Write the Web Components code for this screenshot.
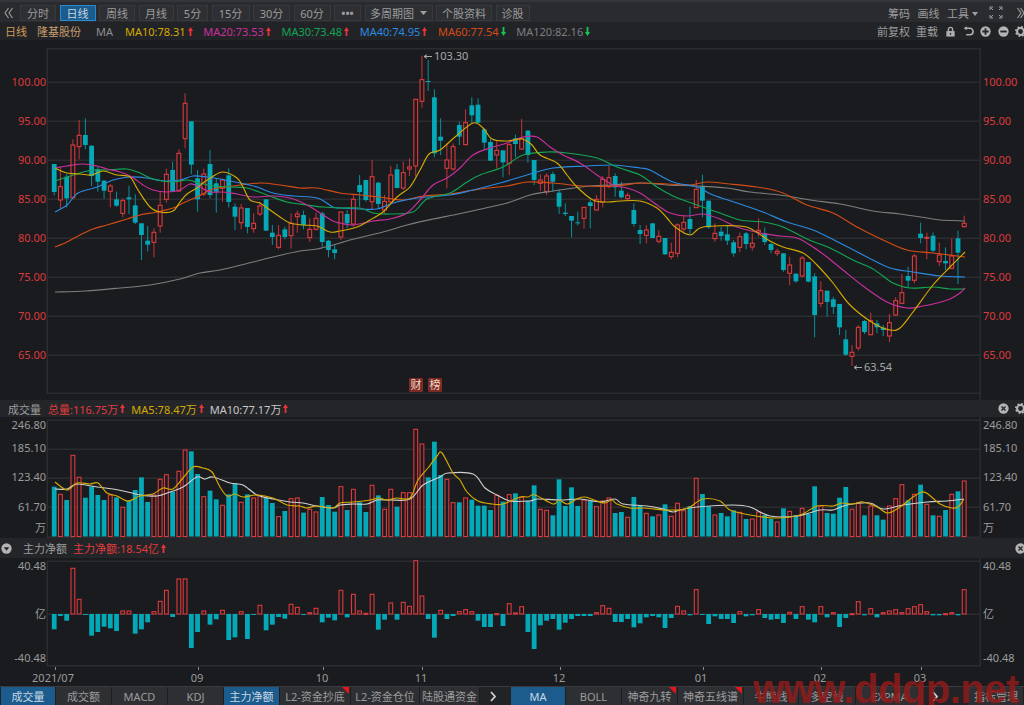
<!DOCTYPE html>
<html lang="zh">
<head>
<meta charset="utf-8">
<title>隆基股份 日线</title>
<style>
  html, body { margin: 0; height: 100%; overflow: hidden; background: #1a1b1f; }
  body { font-family: "Noto Sans", "Noto Sans CJK SC", sans-serif; font-size: 11px; color: #9c9c9c; }
</style>
</head>
<body>
<quote-app>
  <tool-bar slot="toolbar">
    <svg slot="left" class="back" width="9" height="12" viewBox="0 0 9 12" fill="none" stroke="#a0a0a0" stroke-width="1.1"><path d="M4.5 1L1 6l3.5 5M8.5 1L5 6l3.5 5"/></svg>
    <tool-btn slot="left" w="36">分时</tool-btn>
    <tool-btn slot="left" w="36" active>日线</tool-btn>
    <tool-btn slot="left" w="36">周线</tool-btn>
    <tool-btn slot="left" w="35">月线</tool-btn>
    <tool-btn slot="left" w="31">5分</tool-btn>
    <tool-btn slot="left" w="38">15分</tool-btn>
    <tool-btn slot="left" w="37">30分</tool-btn>
    <tool-btn slot="left" w="37">60分</tool-btn>
    <tool-btn slot="left" w="27"><b>•••</b></tool-btn>
    <tool-btn slot="left" w="68" caret>多周期图</tool-btn>
    <tool-btn slot="left" w="56">个股资料</tool-btn>
    <tool-btn slot="left" w="34">诊股</tool-btn>
    <span slot="right">筹码</span>
    <span slot="right">画线</span>
    <span slot="right">工具<svg width="6" height="4" viewBox="0 0 6 4" style="margin-left:3px;vertical-align:2px"><path d="M0 0h6L3 4z" fill="#a0a0a0"/></svg></span>
    <svg slot="right" width="14" height="13" viewBox="0 0 14 13" style="margin:0 6.5px 0 3.5px" fill="none" stroke="#a0a0a0" stroke-width="1"><path d="M1 4V1h3M13 4V1h-3M1 9v3h3M13 9v3h-3M2 2l2 2M12 2l-2 2M2 11l2-2M12 11l-2-2"/></svg>
    <svg slot="right" width="7" height="12" viewBox="0 0 7 12" fill="none" stroke="#a0a0a0" stroke-width="1.1"><path d="M.5 1L4 6 .5 11M3.5 1L7 6l-3.5 5"/></svg>
  </tool-bar>

  <legend-row slot="legend">
    <span slot="left" style="color:#cf9a56;width:32px">日线</span>
    <span slot="left" style="color:#c49c6c;width:59px">隆基股份</span>
    <span slot="left" style="color:#8e8e8e;width:29px">MA</span>
    <ma-item slot="left" color="#d4aa00" dir="up">MA10:78.31</ma-item>
    <ma-item slot="left" color="#c8309c" dir="up">MA20:73.53</ma-item>
    <ma-item slot="left" color="#12a552" dir="up">MA30:73.48</ma-item>
    <ma-item slot="left" color="#2a8ae0" dir="up">MA40:74.95</ma-item>
    <ma-item slot="left" color="#d44c14" dir="down">MA60:77.54</ma-item>
    <ma-item slot="left" color="#7e7e7e" dir="down">MA120:82.16</ma-item>
    <span slot="right" style="margin-right:6px">前复权</span>
    <span slot="right" style="margin-right:7px">重载</span>
    <icon-glyph slot="right" name="lock"></icon-glyph>
    <icon-glyph slot="right" name="undo"></icon-glyph>
    <icon-glyph slot="right" name="plus"></icon-glyph>
    <icon-glyph slot="right" name="minus"></icon-glyph>
    <icon-glyph slot="right" name="gear"></icon-glyph>
  </legend-row>

  <kline-pane slot="kline"></kline-pane>

  <pane-title slot="voltitle">
    <span slot="left" style="margin:0 7px 0 8px">成交量</span>
    <ma-item slot="left" color="#e03c3c" dir="up">总量:116.75万</ma-item>
    <ma-item slot="left" color="#d4aa00" dir="up">MA5:78.47万</ma-item>
    <ma-item slot="left" color="#c8c8c8" dir="up">MA10:77.17万</ma-item>
    <icon-glyph slot="right" name="close"></icon-glyph>
    <icon-glyph slot="right" name="gear"></icon-glyph>
  </pane-title>
  <volume-pane slot="volume"></volume-pane>

  <pane-title slot="flowtitle">
    <icon-glyph slot="left" name="drop" style="margin:0 11px 0 1px"></icon-glyph>
    <span slot="left" style="margin-right:6px">主力净额</span>
    <ma-item slot="left" color="#e03c3c" dir="up">主力净额:18.54亿</ma-item>
    <icon-glyph slot="right" name="close"></icon-glyph>
  </pane-title>
  <flow-pane slot="flow"></flow-pane>

  <date-axis slot="dates"></date-axis>

  <tab-bar slot="tabs">
    <tab-btn slot="left" w="55" active>成交量</tab-btn>
    <tab-btn slot="left" w="56">成交额</tab-btn>
    <tab-btn slot="left" w="56">MACD</tab-btn>
    <tab-btn slot="left" w="56">KDJ</tab-btn>
    <tab-btn slot="left" w="56" active>主力净额</tab-btn>
    <tab-btn slot="left" w="71" flag>L2-资金抄底</tab-btn>
    <tab-btn slot="left" w="69">L2-资金仓位</tab-btn>
    <tab-btn slot="left" w="60">陆股通资金</tab-btn>
    <tab-btn slot="left" w="26" plain><svg width="7" height="11" viewBox="0 0 7 11" fill="none" stroke="#d0d0d0" stroke-width="1.8"><path d="M1 1l4 4.5L1 10"/></svg></tab-btn>
    <tab-btn slot="mid" w="55" active>MA</tab-btn>
    <tab-btn slot="mid" w="56">BOLL</tab-btn>
    <tab-btn slot="mid" w="56" flag>神奇九转</tab-btn>
    <tab-btn slot="mid" w="66" flag>神奇五线谱</tab-btn>
    <tab-btn slot="mid" w="55">牛熊线</tab-btn>
    <tab-btn slot="mid" w="57">多空线</tab-btn>
    <tab-btn slot="mid" w="68">EXPMA</tab-btn>
    <tab-btn slot="mid" w="22" plain><svg width="7" height="11" viewBox="0 0 7 11" fill="none" stroke="#d0d0d0" stroke-width="1.8"><path d="M1 1l4 4.5L1 10"/></svg></tab-btn>
    <tab-btn slot="right" w="55">指标管理</tab-btn>
  </tab-bar>

  <water-mark slot="mark">www.ddgp.net</water-mark>
</quote-app>

<script>
const FONT = `"Noto Sans", "Noto Sans CJK SC", sans-serif`;
const RED = "#dd3a3c", CYAN = "#04a8b6", RED_WICK = "#c4343a", CYAN_WICK = "#0a8f9a";
const GRID = "#2b2c30", AXIS = "#9c9c9c", BG = "#1a1b1f";
const barX = (i) => 54.2 + 6.233 * i;

// [up, bodyTop, bodyBottom, wickTop, wickBottom] read off the crops, 3x scale
const candlesA = [[0,222,306,222,316],[1,290,330,232,355],[0,260,325,252,352],[1,165,323,148,325],[1,136,170,90,208],[0,135,165,85,178],[0,167,258,167,288],[0,238,275,230,305],[0,272,302,270,326],[1,288,304,282,352],[0,328,347,305,350],[1,332,370,325,382],[0,322,328,287,372],[0,346,398,313,402],[0,400,435,400,510],[0,452,464,408,484],[1,427,457,415,502],[1,346,408,305,428],[1,253,328,236,338],[0,240,304,215,304],[1,190,303,178,306],[1,40,146,10,175],[0,94,224,94,252],[0,265,328,240,365],[1,252,312,236,318],[0,222,315,180,325],[0,280,305,265,368],[1,270,295,265,335],[0,256,336,235,352],[0,350,380,340,420],[1,354,398,342,418],[0,354,411,354,430],[1,400,416,370,428],[1,348,372,335,378],[0,328,422,328,422],[0,428,441,405,465],[1,436,472,405,478],[0,418,441,410,448],[1,400,437,370,476],[1,372,380,362,428],[0,375,405,362,418],[1,418,443,385,456],[1,385,418,368,422],[0,370,456,365,470],[0,452,480,450,502],[0,478,489,462,508]];
const candlesB = [[1,516,591,516,600],[0,522,550,510,565],[1,478,552,462,560],[0,435,456,405,500],[0,420,480,420,485],[1,410,485,360,510],[0,428,492,425,505],[1,484,510,465,520],[1,405,486,378,490],[0,388,444,372,445],[1,398,444,365,450],[1,381,387,355,408],[1,178,378,178,410],[1,119,184,47,203],[0,123,126,60,153],[0,172,340,148,352],[0,290,302,235,345],[1,360,385,310,445],[1,320,387,310,392],[0,255,290,245,315],[1,248,314,208,316],[0,196,226,172,250],[0,194,248,175,250],[0,268,308,265,330],[0,306,362,296,362],[1,331,345,300,385],[0,331,367,331,412],[1,314,370,310,405],[0,295,312,284,352],[1,295,327,237,330],[0,272,345,270,368],[0,360,420,360,435],[1,420,430,403,452],[1,408,455,400,465],[0,402,425,395,455],[0,458,500,448,522],[0,518,522,490,528],[0,528,542,528,592],[0,547,549,515,556],[1,502,535,502,566],[0,487,498,480,565],[1,478,510,465,512],[1,418,486,408,502],[1,413,440,378,445],[0,408,442,400,470],[0,452,472,425,475],[1,466,476,458,482],[0,510,552,490,560]];
const candlesC = [[0,180,192,165,222],[1,180,196,165,220],[0,160,204,160,204],[1,199,214,180,220],[0,204,253,204,255],[1,247,260,218,268],[1,165,250,160,262],[1,157,177,135,185],[0,147,177,110,195],[1,58,113,30,113],[0,50,92,14,142],[0,92,172,92,176],[1,190,206,160,216],[0,185,198,170,212],[0,193,212,165,225],[0,217,250,210,260],[1,200,232,188,246],[0,190,222,186,238],[1,220,231,190,242],[1,181,186,145,200],[0,190,216,172,225],[0,222,240,218,250],[1,244,250,236,258],[0,250,300,250,305],[1,285,310,260,346],[0,311,334,311,338],[1,264,318,258,322],[0,276,335,276,337],[0,319,435,310,502],[1,362,400,334,412],[0,362,396,362,440],[0,388,411,380,432],[0,402,472,402,495],[0,508,554,480,558],[1,547,559,525,588],[1,472,534,466,542],[0,453,486,450,492],[1,452,494,428,496],[0,460,472,450,490],[0,473,480,465,498],[1,458,498,432,516],[1,392,435,382,437],[1,368,400,312,402],[0,318,332,290,354],[1,258,331,252,340],[0,191,204,158,220],[1,202,204,188,268],[0,197,242,187,248],[1,255,275,218,288],[0,273,280,232,300],[1,258,295,205,298],[0,205,248,182,342],[1,160,170,137,172]];
const toPx = (rows, off) => rows.map((r) => ({ up: !!r[0], bt: off + r[1] / 3, bb: off + r[2] / 3, wt: off + r[3] / 3, wb: off + r[4] / 3 }));
const CANDLES = [...toPx(candlesA, 90), ...toPx(candlesB, 40), ...toPx(candlesC, 170)];

const MA_LINES = [
  ["#7e7e7e", [[55,292],[85,291],[120,288],[150,285],[180,279],[200,273],[220,270],[253,262],[273,257],[300,251],[317,249],[340,243],[350,240],[383,232],[407,225],[433,219],[463,213],[507,203],[530,195],[553,191],[590,186],[613,185],[640,183],[667,185],[697,186],[727,188],[750,192],[780,195],[810,200],[840,204],[873,211],[900,214],[927,218],[940,220],[965,221]]],
  ["#d44c14", [[55,247],[67,242],[80,235],[93,229],[107,225],[127,219],[140,215],[157,212],[173,208],[183,203],[197,197],[213,189],[233,186],[260,183],[280,185],[300,188],[317,188],[340,193],[360,195],[380,197],[403,200],[423,196],[450,194],[480,189],[507,186],[527,182],[553,183],[583,186],[617,186],[640,183],[667,184],[690,185],[707,182],[730,184],[763,188],[783,193],[807,205],[833,213],[857,227],[883,240],[907,250],[933,253],[965,257]]],
  ["#2a8ae0", [[55,212],[67,205],[78,193],[97,187],[113,180],[130,177],[147,178],[163,181],[180,180],[193,176],[207,177],[220,179],[240,183],[257,187],[273,193],[293,196],[317,198],[333,207],[340,208],[360,209],[377,209],[393,203],[417,198],[450,195],[473,190],[500,183],[527,175],[553,168],[587,166],[613,165],[640,168],[650,170],[673,182],[697,187],[713,195],[737,203],[763,212],[787,222],[813,230],[840,243],[867,257],[890,268],[913,272],[940,276],[965,277]]],
  ["#12a552", [[55,181],[67,177],[80,173],[93,170],[107,170],[127,169],[140,173],[153,179],[173,182],[187,180],[200,183],[213,186],[230,187],[247,188],[267,195],[287,202],[307,205],[323,207],[340,208],[360,208],[373,213],[390,214],[413,212],[427,199],[450,193],[467,182],[480,175],[503,167],[523,155],[547,152],[567,153],[597,158],[617,167],[640,175],[657,187],[673,196],[697,205],[717,212],[740,220],[763,222],[783,227],[807,239],[830,248],[853,260],[873,269],[893,283],[910,288],[933,287],[950,289],[965,289]]],
  ["#c8309c", [[55,168],[67,166],[83,164],[97,166],[107,169],[120,172],[132,177],[143,185],[153,190],[167,192],[180,190],[190,184],[200,187],[210,192],[223,192],[237,194],[253,197],[273,196],[290,198],[307,205],[320,213],[333,221],[340,223],[353,225],[373,221],[390,219],[407,213],[420,200],[433,185],[447,178],[460,168],[473,155],[490,148],[507,143],[523,137],[537,137],[550,147],[563,155],[580,163],[597,175],[613,185],[627,188],[640,193],[657,205],[670,213],[687,216],[703,214],[720,219],[737,227],[760,233],[780,236],[797,238],[813,247],[827,257],[843,270],[863,286],[887,302],[907,308],[923,306],[937,303],[950,299],[960,293],[965,288]]],
  ["#d4aa00", [[55,168],[67,173],[80,174],[92,175],[103,171],[117,175],[130,177],[138,190],[150,207],[160,212],[173,211],[180,202],[187,194],[197,188],[203,183],[212,177],[223,172],[237,178],[243,187],[250,200],[260,203],[270,210],[280,217],[290,223],[303,225],[317,226],[330,232],[340,231],[357,227],[370,220],[383,212],[397,197],[410,187],[420,170],[429,154],[440,150],[455,137],[473,123],[483,128],[492,139],[507,141],[522,139],[532,145],[540,155],[557,163],[567,175],[577,187],[593,200],[607,202],[620,201],[640,201],[657,208],[667,218],[675,227],[690,235],[703,227],[740,226],[753,230],[770,241],[783,247],[803,253],[817,265],[833,283],[850,305],[873,323],[890,330],[900,328],[913,312],[933,285],[950,267],[965,252]]],
];

// volume bar tops, same crops (base y 498, 350, 410)
const volA = [350,373,390,256,322,383,350,375,390,375,382,412,392,360,322,396,375,328,314,365,304,240,244,312,380,362,388,406,373,340,397,373,384,376,384,399,440,423,386,384,428,418,426,381,405,425];
const volB = [200,270,208,247,276,196,226,268,208,260,218,218,28,72,172,65,165,178,248,247,234,239,257,257,270,226,245,224,220,232,242,196,268,271,286,178,258,202,258,240,243,260,243,234,279,276,292,231,258,280,289,285,253,289,250];
const volC = [332,318,235,282,318,345,339,349,331,337,357,357,336,345,357,366,325,334,345,325,342,259,318,339,341,293,261,328,308,346,318,346,359,318,296,254,301,283,254,313,346,349,330,283,274,243];
const VOLUME = [...volA.map((t) => 370 + t / 3), ...volB.map((t) => 420 + t / 3), ...volC.map((t) => 400 + t / 3)];
const VOL_MA5 = [[55,482],[67,490],[77,483],[90,484],[98,483],[107,493],[117,496],[128,501],[140,496],[153,494],[163,488],[173,489],[183,478],[193,467],[203,468],[212,472],[220,487],[227,496],[235,494],[243,497],[257,495],[273,498],[287,505],[300,506],[307,508],[317,506],[333,508],[340,503],[353,502],[370,500],[379,498],[387,500],[397,498],[410,498],[418,480],[428,468],[437,456],[442,453],[453,473],[460,480],[467,492],[478,501],[492,504],[503,504],[520,497],[528,497],[535,495],[553,504],[559,500],[567,504],[577,499],[585,497],[597,501],[605,503],[612,500],[617,504],[630,508],[645,508],[663,510],[672,510],[680,510],[690,507],[703,499],[720,501],[730,510],[750,515],[777,518],[800,515],[817,506],[833,506],[842,503],[853,504],[863,502],[877,507],[888,513],[900,507],[913,497],[922,492],[928,494],[940,504],[952,508],[958,507],[964,499]];
const VOL_MA10 = [[55,489],[67,489],[77,484],[97,487],[113,489],[132,493],[140,495],[157,496],[170,492],[183,487],[197,477],[205,479],[213,477],[230,483],[243,485],[257,495],[273,499],[290,502],[303,503],[317,506],[333,508],[340,505],[353,504],[367,504],[377,500],[390,500],[410,499],[423,485],[440,477],[448,473],[473,474],[485,488],[497,495],[510,501],[530,501],[537,499],[560,500],[580,499],[600,502],[615,499],[623,504],[647,506],[663,509],[673,512],[680,510],[697,507],[733,505],[750,507],[770,516],[797,516],[820,510],[833,510],[847,505],[870,503],[883,509],[903,505],[927,502],[947,501],[964,499]];

// net inflow bar heights in crop px, positive is up (zero line y=614)
const FLOW = [-46,-6,-20,137,44,-3,-65,-54,-38,-43,-51,9,9,-59,-46,-25,7,38,71,-9,105,105,-102,-54,9,-32,-16,11,-78,-70,7,-75,-3,26,-49,-32,-9,-14,29,20,-3,4,17,-25,-11,-19,71,-10,59,9,2,59,-47,-17,33,-17,35,23,160,54,-15,-71,11,-15,-6,7,13,7,-20,-39,-39,1,-36,31,3,22,-54,-105,-34,-20,-15,-47,-26,-15,-6,-6,-6,4,25,17,-24,-24,-15,-40,-28,-10,-6,-10,-42,-12,23,9,-4,73,-3,-30,-7,-15,-15,-27,7,-7,-4,13,-12,-17,-15,-27,5,-15,22,-17,-25,22,-10,4,-39,-12,1,37,-4,16,-10,4,9,13,4,16,22,28,7,-4,-4,1,4,-4,73];

function smoothPath(pts) {
  let d = `M${pts[0][0]} ${pts[0][1]}`;
  for (let i = 0; i < pts.length - 1; i++) {
    const p0 = pts[i - 1] || pts[i], p1 = pts[i], p2 = pts[i + 1], p3 = pts[i + 2] || p2;
    const c1x = p1[0] + (p2[0] - p0[0]) / 6, c1y = p1[1] + (p2[1] - p0[1]) / 6;
    const c2x = p2[0] - (p3[0] - p1[0]) / 6, c2y = p2[1] - (p3[1] - p1[1]) / 6;
    d += `C${c1x.toFixed(1)} ${c1y.toFixed(1)} ${c2x.toFixed(1)} ${c2y.toFixed(1)} ${p2[0]} ${p2[1]}`;
  }
  return d;
}
const linePath = (pts, color, w = 1.15) => `<path d="${smoothPath(pts)}" fill="none" stroke="${color}" stroke-width="${w}" stroke-linejoin="round"/>`;
const hline = (y) => `<rect x="47" y="${y - 0.5}" width="933" height="1.5" fill="${GRID}"/>`;
const vline = (x, y1, y2) => `<rect x="${x - 0.5}" y="${y1}" width="1.5" height="${y2 - y1}" fill="${GRID}"/>`;
const leftLabel = (y, t, c = AXIS) => `<text x="46" y="${y + 4}" text-anchor="end" fill="${c}">${t}</text>`;
const rightLabel = (y, t, c = AXIS) => `<text x="983" y="${y + 4}" fill="${c}">${t}</text>`;
function bar(i, top, bottom, up) {
  const cx = barX(i), h = Math.max(bottom - top, 1);
  return up
    ? `<rect x="${(cx - 1.9).toFixed(2)}" y="${top.toFixed(2)}" width="3.8" height="${h.toFixed(2)}" fill="${BG}" stroke="${RED}" stroke-width="1.1"/>`
    : `<rect x="${(cx - 2.4).toFixed(2)}" y="${top.toFixed(2)}" width="4.8" height="${h.toFixed(2)}" fill="${CYAN}"/>`;
}
function paneStyle(height) {
  return `<style>
    :host { display: block; height: ${height}px; background: ${BG}; }
    svg { display: block; width: 1024px; height: ${height}px; font: 11px ${FONT}; }
  </style>`;
}

class KlinePane extends HTMLElement {
  constructor() {
    super();
    this.attachShadow({ mode: "open" });
    const prices = [[82,"100.00"],[121,"95.00"],[160,"90.00"],[199,"85.00"],[238,"80.00"],[277,"75.00"],[316,"70.00"],[355,"65.00"]];
    const grid = prices.map(([y]) => hline(y)).join("");
    const labels = prices.map(([y, t]) => leftLabel(y, t, RED) + rightLabel(y, t, RED)).join("");
    const candles = CANDLES.map((c, i) => {
      const cx = barX(i), wick = c.up ? RED_WICK : CYAN_WICK;
      return `<rect x="${(cx - 0.5).toFixed(2)}" y="${c.wt.toFixed(2)}" width="1" height="${(c.wb - c.wt).toFixed(2)}" fill="${wick}"/>` + bar(i, c.bt, c.bb, c.up);
    }).join("");
    const lines = MA_LINES.map(([color, pts]) => linePath(pts, color)).join("");
    this.shadowRoot.innerHTML = `${paneStyle(360)}
      <svg viewBox="0 40 1024 360">
        <rect x="47" y="48" width="933" height="1.5" fill="${GRID}"/>
        <rect x="47" y="392.5" width="933" height="1.5" fill="${GRID}"/>
        ${vline(47, 48, 394)}${vline(980, 48, 400)}
        ${grid}${labels}${candles}${lines}
        <path d="M424 56.5h8M424 56.5l3-2M424 56.5l3 2" stroke="#a8a8a8" fill="none"/>
        <text x="434" y="60" fill="#a8a8a8">103.30</text>
        <path d="M854 367.5h8M854 367.5l3-2M854 367.5l3 2" stroke="#a8a8a8" fill="none"/>
        <text x="864" y="371" fill="#a8a8a8">63.54</text>
        <rect x="409" y="378" width="14" height="14" rx="1" fill="#7c2a24"/>
        <rect x="428" y="378" width="14" height="14" rx="1" fill="#7c2a24"/>
        <text x="416" y="389" text-anchor="middle" fill="#f0d8c8">财</text>
        <text x="435" y="389" text-anchor="middle" fill="#f0d8c8">榜</text>
      </svg>`;
  }
}

class VolumePane extends HTMLElement {
  constructor() {
    super();
    this.attachShadow({ mode: "open" });
    const base = 536.5;
    const bars = VOLUME.map((top, i) => bar(i, top, base, CANDLES[i].up)).join("");
    const rows = [[425,"246.80"],[448,"185.10"],[477,"123.40"],[507,"61.70"],[528,"万"]];
    this.shadowRoot.innerHTML = `${paneStyle(121)}
      <svg viewBox="0 417 1024 121">
        ${[420,449,478,507,537].map(hline).join("")}
        ${vline(47, 420, 538)}${vline(980, 417, 538)}
        ${rows.map(([y, t]) => leftLabel(y, t) + rightLabel(y, t)).join("")}
        ${bars}
        ${linePath(VOL_MA10, "#d0d0d0")}
        ${linePath(VOL_MA5, "#d4aa00")}
      </svg>`;
  }
}

class FlowPane extends HTMLElement {
  constructor() {
    super();
    this.attachShadow({ mode: "open" });
    const zero = 614;
    const bars = FLOW.map((v, i) => {
      const h = Math.abs(v) / 3;
      return v > 0 ? bar(i, zero - h, zero, true) : bar(i, zero, zero + h, false);
    }).join("");
    const rows = [[566,"40.48"],[614,"亿"],[658,"-40.48"]];
    this.shadowRoot.innerHTML = `${paneStyle(109)}
      <svg viewBox="0 558 1024 109">
        ${[561,614,665.5].map(hline).join("")}
        ${vline(47, 561, 666)}${vline(980, 558, 667)}
        ${rows.map(([y, t]) => leftLabel(y, t) + rightLabel(y, t)).join("")}
        ${bars}
      </svg>`;
  }
}

class DateAxis extends HTMLElement {
  constructor() {
    super();
    this.attachShadow({ mode: "open" });
    const ticks = [[55,53,"2021/07"],[198,197,"09"],[323,322,"10"],[422,421,"11"],[560,559,"12"],[703,701,"01"],[821,820,"02"],[921,920,"03"]];
    this.shadowRoot.innerHTML = `${paneStyle(19)}
      <svg viewBox="0 667 1024 19">
        ${ticks.map(([x, tx, t]) => `<rect x="${x}" y="667" width="1" height="3" fill="#8a8a8a"/><text x="${tx}" y="682" text-anchor="middle" fill="${AXIS}">${t}</text>`).join("")}
      </svg>`;
  }
}

class ToolBar extends HTMLElement {
  constructor() {
    super();
    this.attachShadow({ mode: "open" }).innerHTML = `<style>
      :host { display: block; height: 22px; box-sizing: border-box; border-top: 2px solid #343539; background: #2a2b2f; }
      .row { display: flex; align-items: center; justify-content: space-between; height: 20px; padding-top: 1px; box-sizing: border-box; }
      .left, .right { display: flex; align-items: center; }
      .left { gap: 3.5px; padding-left: 4px; }
      .right { gap: 7.5px; }
      ::slotted(.back) { margin-right: 3.5px; }
    </style>
    <div class="row"><div class="left"><slot name="left"></slot></div><div class="right"><slot name="right"></slot></div></div>`;
  }
}

class ToolBtn extends HTMLElement {
  connectedCallback() {
    this.style.width = `${this.getAttribute("w")}px`;
    const caret = this.hasAttribute("caret")
      ? `<svg width="7" height="4" viewBox="0 0 7 4" style="margin-left:6px"><path d="M0 0h7L3.5 4z" fill="#a0a0a0"/></svg>` : "";
    this.attachShadow({ mode: "open" }).innerHTML = `<style>
      :host { display: flex; align-items: center; justify-content: center; height: 16px; box-sizing: border-box; border: 1px solid #38393d; background: #2e2f33; color: #9c9c9c; }
      :host([active]) { background: #1c5c8c; border-color: #2a8ad0; color: #c4d4e0; }
    </style><slot></slot>${caret}`;
  }
}

class LegendRow extends HTMLElement {
  constructor() {
    super();
    this.attachShadow({ mode: "open" }).innerHTML = `<style>
      :host { display: block; height: 18px; background: #222327; --gap: 10.6px; }
      .row { display: flex; align-items: center; justify-content: space-between; height: 18px; }
      .left { display: flex; align-items: center; padding-left: 5px; }
      .right { display: flex; align-items: center; margin-right: -2px; }
    </style>
    <div class="row"><div class="left"><slot name="left"></slot></div><div class="right"><slot name="right"></slot></div></div>`;
  }
}

class PaneTitle extends HTMLElement {
  constructor() {
    super();
    this.attachShadow({ mode: "open" }).innerHTML = `<style>
      :host { display: flex; align-items: center; justify-content: space-between; background: #242529; color: #9c9c9c; --gap: 6px; }
      .side { display: flex; align-items: center; }
      .side.end { margin-right: -2px; }
    </style>
    <div class="side"><slot name="left"></slot></div><div class="side end"><slot name="right"></slot></div>`;
  }
}

class MaItem extends HTMLElement {
  connectedCallback() {
    const up = this.getAttribute("dir") === "up";
    const arrow = up ? "M2.5 0L5 4H3.4V9H1.6V4H0z" : "M2.5 9L5 5H3.4V0H1.6V5H0z";
    this.attachShadow({ mode: "open" }).innerHTML = `<style>
      :host { display: inline-flex; align-items: center; margin-right: var(--gap, 8px); color: ${this.getAttribute("color")}; }
      svg { margin-left: 2px; }
    </style><slot></slot><svg width="5" height="9" viewBox="0 0 5 9"><path d="${arrow}" fill="${up ? "#e8343a" : "#14c850"}"/></svg>`;
  }
}

const ICONS = {
  lock: `<path d="M3 6V3.8a3 3 0 0 1 6 0V6H7.5V3.8a1.5 1.5 0 0 0-3 0V6z" fill="#b0b0b0"/><path d="M1.5 5.5h9v6h-9z" fill="#b0b0b0"/><path d="M5.3 7.5h1.4v2H5.3z" fill="#222327"/>`,
  undo: `<path d="M3 2.5h4.5a3.4 3.4 0 0 1 0 7H3.5" fill="none" stroke="#b0b0b0" stroke-width="1.7"/><path d="M4 .3v4.4L.8 2.5z" fill="#b0b0b0"/>`,
  plus: `<circle cx="6" cy="6" r="5.6" fill="#b4b4b4"/><path d="M5 2.5h2V5h2.5v2H7v2.5H5V7H2.5V5H5z" fill="#26272b"/>`,
  minus: `<circle cx="6" cy="6" r="5.6" fill="#b4b4b4"/><path d="M2.5 5h7v2h-7z" fill="#26272b"/>`,
  gear: `<circle cx="6" cy="6" r="3.7" fill="none" stroke="#b4b4b4" stroke-width="2.2"/><circle cx="6" cy="6" r="5" fill="none" stroke="#b4b4b4" stroke-width="2" stroke-dasharray="2 1.93"/>`,
  close: `<circle cx="6" cy="6" r="5.6" fill="#b4b4b4"/><path d="M3.8 3.8l4.4 4.4M8.2 3.8L3.8 8.2" stroke="#26272b" stroke-width="1.5"/>`,
  drop: `<circle cx="6" cy="6" r="5.6" fill="#b4b4b4"/><path d="M3 4.5h6L6 8.5z" fill="#26272b"/>`,
};
class IconGlyph extends HTMLElement {
  connectedCallback() {
    this.attachShadow({ mode: "open" }).innerHTML = `<style>
      :host { display: inline-flex; margin-right: 6.5px; }
      :host(:last-child) { margin-right: 0; }
      svg { display: block; flex: none; }
    </style><svg width="11" height="11" viewBox="0 0 12 12">${ICONS[this.getAttribute("name")]}</svg>`;
  }
}

class TabBar extends HTMLElement {
  constructor() {
    super();
    this.attachShadow({ mode: "open" }).innerHTML = `<style>
      :host { display: flex; height: 19px; background: #222327; overflow: hidden; padding-left: 1px; box-sizing: border-box; border-top: 1px solid #3a3b3f; }
      .left, .mid { display: flex; }
      .mid { margin-left: 5px; }
      .right { display: flex; margin-left: auto; }
    </style>
    <div class="left"><slot name="left"></slot></div>
    <div class="mid"><slot name="mid"></slot></div>
    <div class="right"><slot name="right"></slot></div>`;
  }
}

class TabBtn extends HTMLElement {
  connectedCallback() {
    this.style.width = `${this.getAttribute("w")}px`;
    const flag = this.hasAttribute("flag") ? `<i></i>` : "";
    this.attachShadow({ mode: "open" }).innerHTML = `<style>
      :host { display: flex; align-items: center; justify-content: center; position: relative; flex: none; box-sizing: border-box; background: #2e2f33; border-right: 1px solid #1d1e22; color: #9c9c9c; white-space: nowrap; }
      :host([active]) { background: #1c5c8c; color: #c8d8e4; }
      :host([plain]) { background: #222327; border: 0; }
      i { position: absolute; top: 0; right: 1px; border-style: solid; border-width: 0 7px 7px 0; border-color: transparent #e8141c transparent transparent; }
    </style><slot></slot>${flag}`;
  }
}

// lies over the bottom right corner of the page, like the stamp in the picture
class WaterMark extends HTMLElement {
  constructor() {
    super();
    this.attachShadow({ mode: "open" }).innerHTML = `<style>
      :host { position: absolute; left: 753px; top: 669px; font: bold 40px/40px "Liberation Sans", sans-serif; letter-spacing: -.5px; color: #8f1a1a; white-space: nowrap; opacity: .85; }
    </style><slot></slot>`;
  }
}

class QuoteApp extends HTMLElement {
  constructor() {
    super();
    this.attachShadow({ mode: "open" }).innerHTML = `<style>
      :host { display: grid; position: relative; width: 1024px; height: 705px; overflow: hidden; grid-template-rows: 22px 18px 360px 17px 121px 20px 109px 19px 19px; }
    </style>
    <slot name="toolbar"></slot><slot name="legend"></slot><slot name="kline"></slot>
    <slot name="voltitle"></slot><slot name="volume"></slot>
    <slot name="flowtitle"></slot><slot name="flow"></slot>
    <slot name="dates"></slot><slot name="tabs"></slot><slot name="mark"></slot>`;
  }
}

customElements.define("kline-pane", KlinePane);
customElements.define("volume-pane", VolumePane);
customElements.define("flow-pane", FlowPane);
customElements.define("date-axis", DateAxis);
customElements.define("tool-bar", ToolBar);
customElements.define("tool-btn", ToolBtn);
customElements.define("legend-row", LegendRow);
customElements.define("pane-title", PaneTitle);
customElements.define("ma-item", MaItem);
customElements.define("icon-glyph", IconGlyph);
customElements.define("tab-bar", TabBar);
customElements.define("tab-btn", TabBtn);
customElements.define("water-mark", WaterMark);
customElements.define("quote-app", QuoteApp);
</script>
</body>
</html>
